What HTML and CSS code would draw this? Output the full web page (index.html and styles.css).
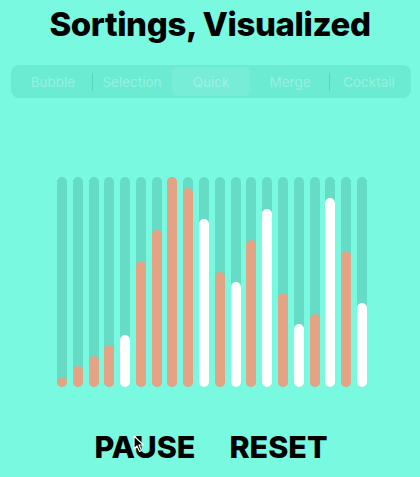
FILE: index.html
```html
<!DOCTYPE html>
<html>
<head>
<meta charset="utf-8">
<link rel="stylesheet" href="styles.css">
</head>
<body>
<div class="app">
  <h1 class="title">Sortings, Visualized</h1>
  <div class="segmented">
    <div class="seg">Bubble</div>
    <div class="divider"></div>
    <div class="seg">Selection</div>
    <div class="divider hidden"></div>
    <div class="seg selected">Quick</div>
    <div class="divider hidden"></div>
    <div class="seg">Merge</div>
    <div class="divider"></div>
    <div class="seg">Cocktail</div>
  </div>
  <div class="chart">
    <div class="track"><div class="bar orange" style="height:10.5px"></div></div>
    <div class="track"><div class="bar orange" style="height:21px"></div></div>
    <div class="track"><div class="bar orange" style="height:31.5px"></div></div>
    <div class="track"><div class="bar orange" style="height:42px"></div></div>
    <div class="track"><div class="bar white" style="height:52.5px"></div></div>
    <div class="track"><div class="bar orange" style="height:126px"></div></div>
    <div class="track"><div class="bar orange" style="height:157.5px"></div></div>
    <div class="track"><div class="bar orange" style="height:210px"></div></div>
    <div class="track"><div class="bar orange" style="height:199.5px"></div></div>
    <div class="track"><div class="bar white" style="height:168px"></div></div>
    <div class="track"><div class="bar orange" style="height:115.5px"></div></div>
    <div class="track"><div class="bar white" style="height:105px"></div></div>
    <div class="track"><div class="bar orange" style="height:147px"></div></div>
    <div class="track"><div class="bar white" style="height:178.5px"></div></div>
    <div class="track"><div class="bar orange" style="height:94.5px"></div></div>
    <div class="track"><div class="bar white" style="height:63px"></div></div>
    <div class="track"><div class="bar orange" style="height:73.5px"></div></div>
    <div class="track"><div class="bar white" style="height:189px"></div></div>
    <div class="track"><div class="bar orange" style="height:136.5px"></div></div>
    <div class="track"><div class="bar white" style="height:84px"></div></div>
  </div>
  <div class="controls">
    <div class="btn">PAUSE</div>
    <div class="btn">RESET</div>
    <svg class="cursor" width="12" height="18" viewBox="0 0 12 18">
      <path d="M1 1 L1 14 L4 11 L6.5 16.5 L8.5 15.5 L6 10 L10.5 10 Z" fill="#000" stroke="#fff" stroke-width="1.2" stroke-linejoin="round"/>
    </svg>
  </div>
</div>
</body>
</html>
```
FILE: styles.css
```css
html, body {
  margin: 0;
  padding: 0;
  background: #78f9e0;
}
body {
  width: 420px;
  height: 477px;
  overflow: hidden;
  font-family: Inter, "Liberation Sans", sans-serif;
}
.app {
  display: flex;
  flex-direction: column;
}
.title {
  margin: 0;
  padding-top: 4px;
  height: 65px;
  box-sizing: border-box;
  font-size: 33px;
  line-height: 40px;
  font-weight: 800;
  text-align: center;
  color: #000;
  letter-spacing: -0.4px;
}
.segmented {
  margin: 0 9px 0 11px;
  height: 33px;
  border-radius: 8px;
  background: rgba(80, 200, 180, 0.28);
  display: flex;
  align-items: center;
  padding: 0 3px;
  box-sizing: border-box;
}
.seg {
  flex: 1;
  height: 29px;
  display: flex;
  align-items: center;
  justify-content: center;
  font-size: 13.5px;
  color: rgba(255, 255, 255, 0.3);
  border-radius: 6px;
}
.seg.selected {
  background: rgba(255, 255, 255, 0.08);
}
.divider {
  width: 1px;
  height: 18px;
  background: rgba(60, 170, 150, 0.35);
}
.divider.hidden {
  background: transparent;
}
.chart {
  margin-top: 79px;
  margin-left: 57px;
  width: 310px;
  height: 210px;
  display: flex;
  justify-content: space-between;
}
.track {
  width: 10px;
  height: 210px;
  border-radius: 5px;
  background: #66dbc5;
  display: flex;
  flex-direction: column;
  justify-content: flex-end;
}
.bar {
  width: 10px;
  border-radius: 5px;
}
.bar.orange {
  background: #e5a386;
}
.bar.white {
  background: #ffffff;
}
.controls {
  position: relative;
  margin-top: 42px;
  display: flex;
  justify-content: center;
  gap: 34px;
  padding-left: 2px;
}
.btn {
  font-size: 30.5px;
  line-height: 36px;
  font-weight: 800;
  color: #000;
}
.cursor {
  position: absolute;
  left: 133px;
  top: 6px;
}
```
